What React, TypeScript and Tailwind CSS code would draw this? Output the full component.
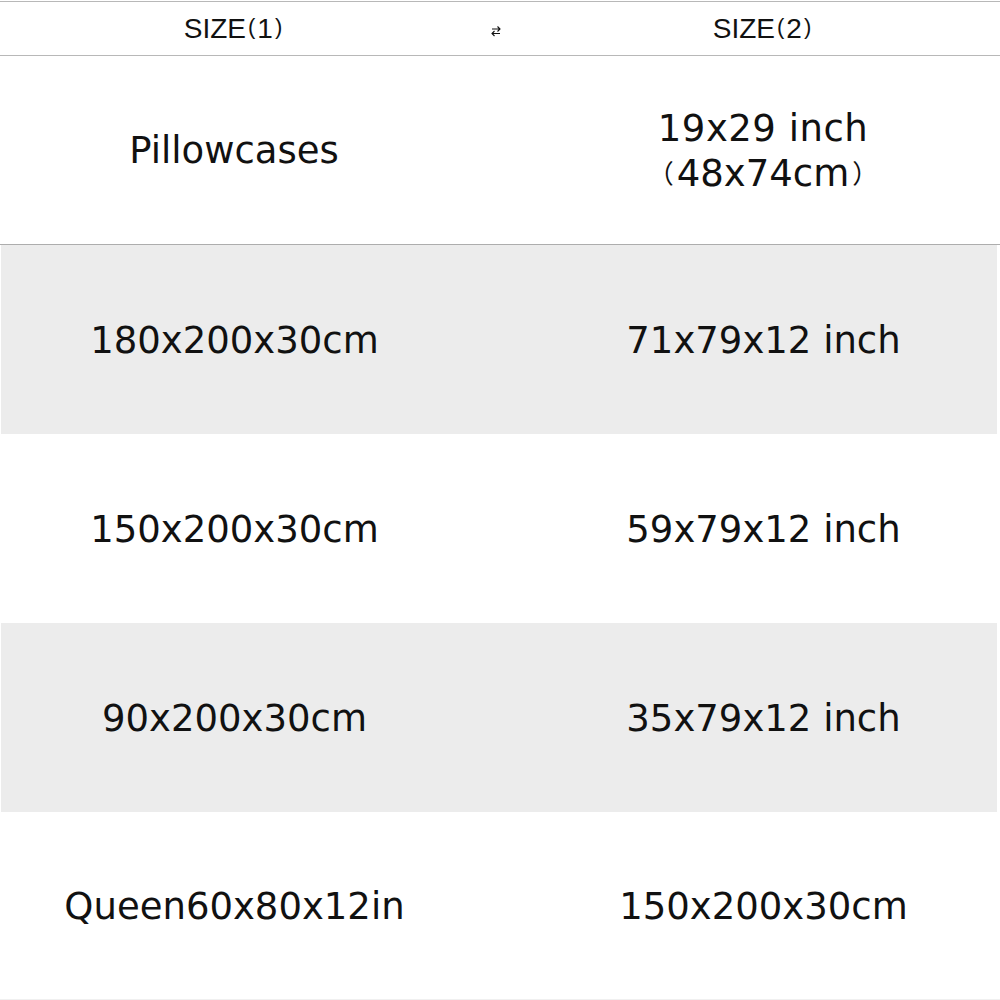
import React from "react";

const Paren = ({ c }: { c: string }) => (
  <span className="text-[26px] align-[3px] mx-[3px]" style={{ fontFamily: '"Noto Sans CJK SC", sans-serif' }}>{c}</span>
);

const rows: { left: string; right: string; gray: boolean }[] = [
  { left: "180x200x30cm", right: "71x79x12 inch", gray: true },
  { left: "150x200x30cm", right: "59x79x12 inch", gray: false },
  { left: "90x200x30cm", right: "35x79x12 inch", gray: true },
  { left: "Queen60x80x12in", right: "150x200x30cm", gray: false },
];

export default function App() {
  return (
    <div className="w-[1000px] h-[1000px] bg-white text-[#111] overflow-hidden" style={{ fontFamily: '"DejaVu Sans", sans-serif' }}>
      <div className="mt-px h-[55px] border-t border-b border-[#b8b8b8] grid grid-cols-[468px_62px_1fr] items-center">
        <div className="text-center text-[28px] pt-[1px]" style={{ fontFamily: '"Liberation Sans", Arial, sans-serif' }}>
          SIZE<span className="text-[22px] align-[4px] mx-[2px]">(</span>1<span className="text-[22px] align-[4px] mx-[2px]">)</span>
        </div>
        <div className="flex justify-center pt-[4px] pr-[6px]">
          <svg width="12" height="12" viewBox="0 0 12 12" fill="none" stroke="#111" strokeWidth="1.1">
            <path d="M2 4h8M7.5 1.5L10 4L7.5 6.5" />
            <path d="M10 8.5H2M4.5 6L2 8.5L4.5 11" />
          </svg>
        </div>
        <div className="text-center text-[28px] pr-[4px] pt-[1px]" style={{ fontFamily: '"Liberation Sans", Arial, sans-serif' }}>
          SIZE<span className="text-[22px] align-[4px] mx-[2px]">(</span>2<span className="text-[22px] align-[4px] mx-[2px]">)</span>
        </div>
      </div>
      <div className="h-[189px] border-b border-[#adadad] grid grid-cols-[468px_62px_1fr] items-center text-[37px]">
        <div className="text-center pt-[2px]">Pillowcases</div>
        <div />
        <div className="text-center leading-[43px] pr-[4px] pt-[2px]">
          <div className="tracking-[0.5px]">19x29 inch</div>
          <div>
            <Paren c="（" />48x74cm<Paren c="）" />
          </div>
        </div>
      </div>
      {rows.map((r, i) => (
        <div
          key={i}
          className={`ml-px mr-[3px] ${i === 3 ? "h-[187px]" : "h-[189px]"} grid grid-cols-[467px_62px_1fr] items-center text-[37px] ${r.gray ? "bg-[#ececec]" : "bg-white"}`}
        >
          <div className="text-center pt-[2px]">{r.left}</div>
          <div />
          <div className="text-center pt-[2px]">{r.right}</div>
        </div>
      ))}
      <div className="border-t-2 border-[#f0f0f0]" />
    </div>
  );
}
